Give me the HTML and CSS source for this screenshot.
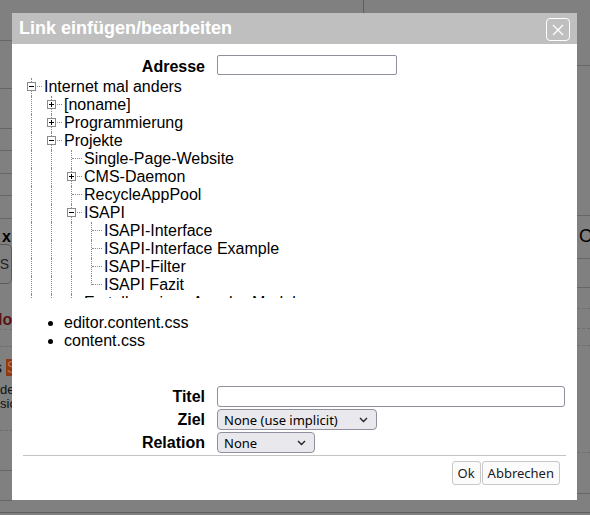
FILE: index.html
```html
<!DOCTYPE html>
<html lang="de">
<head>
<meta charset="utf-8">
<title>Link einfügen/bearbeiten</title>
<link rel="stylesheet" href="styles.css">
</head>
<body>
<div class="backdrop">
  <div class="bg-cols">
    <div class="strip strip-left">
      <div class="sr h41"></div>
      <div class="sr h48"></div>
      <div class="sr h40"></div>
      <div class="sr h22"></div>
      <div class="sr h23"></div>
      <div class="sr h22"></div>
      <div class="sr h23"></div>
      <div class="bg-x">x</div>
      <div class="bg-btn">S</div>
      <div class="bg-lo">lo</div>
      <div class="sr-dash h17"></div>
      <div class="bg-s">s <span class="bg-orange">S</span></div>
      <div class="bg-para">de<br>sic</div>
      <div class="sr-dash h14"></div>
      <div class="sr h40"></div>
      <div class="sr h30"></div>
    </div>
    <div class="bg-mid">
      <div class="bg-vline"></div>
    </div>
    <div class="strip strip-right">
      <div class="sr h66"></div>
      <div class="sr h150"></div>
      <div class="bg-c">C</div>
      <div class="sr h29"></div>
      <div class="sr-dash h21"></div>
      <div class="sr-dash h20"></div>
      <div class="sr-dash h17"></div>
      <div class="sr-dash h107"></div>
      <div class="sr h41"></div>
    </div>
  </div>
  <div class="bg-bottom"></div>
</div>

<div class="dialog">
  <div class="titlebar">
    <span class="title">Link einfügen/bearbeiten</span>
    <button class="close" aria-label="Schließen">
      <svg width="12" height="12" viewBox="0 0 12 12"><path d="M1 1 L11 11 M11 1 L1 11" stroke="#fff" stroke-width="1.3" fill="none"/></svg>
    </button>
  </div>
  <div class="body">
    <div class="field field-top">
      <label class="lbl">Adresse</label>
      <input class="inp inp-addr" type="text">
    </div>

    <div class="tree">
      <div class="row"><span class="c t"><i class="box minus"></i></span><span class="txt">Internet mal anders</span></div>
      <div class="row"><span class="c v"></span><span class="c t"><i class="box plus"></i></span><span class="txt">[noname]</span></div>
      <div class="row"><span class="c v"></span><span class="c t"><i class="box plus"></i></span><span class="txt">Programmierung</span></div>
      <div class="row"><span class="c v"></span><span class="c t"><i class="box minus"></i></span><span class="txt">Projekte</span></div>
      <div class="row"><span class="c v"></span><span class="c v"></span><span class="c t"></span><span class="txt">Single-Page-Website</span></div>
      <div class="row"><span class="c v"></span><span class="c v"></span><span class="c t"><i class="box plus"></i></span><span class="txt">CMS-Daemon</span></div>
      <div class="row"><span class="c v"></span><span class="c v"></span><span class="c t"></span><span class="txt">RecycleAppPool</span></div>
      <div class="row"><span class="c v"></span><span class="c v"></span><span class="c t"><i class="box minus"></i></span><span class="txt">ISAPI</span></div>
      <div class="row"><span class="c v"></span><span class="c v"></span><span class="c v"></span><span class="c t"></span><span class="txt">ISAPI-Interface</span></div>
      <div class="row"><span class="c v"></span><span class="c v"></span><span class="c v"></span><span class="c t"></span><span class="txt">ISAPI-Interface Example</span></div>
      <div class="row"><span class="c v"></span><span class="c v"></span><span class="c v"></span><span class="c t"></span><span class="txt">ISAPI-Filter</span></div>
      <div class="row"><span class="c v"></span><span class="c v"></span><span class="c v"></span><span class="c l"></span><span class="txt">ISAPI Fazit</span></div>
      <div class="row"><span class="c v"></span><span class="c v"></span><span class="c t"></span><span class="txt">Erstellen eines Apache-Moduls</span></div>
    </div>

    <ul class="css-list">
      <li>editor.content.css</li>
      <li>content.css</li>
    </ul>

    <div class="form">
      <div class="field">
        <label class="lbl">Titel</label>
        <input class="inp inp-title" type="text">
      </div>
      <div class="field">
        <label class="lbl">Ziel</label>
        <div class="sel sel-ziel"><span>None (use implicit)</span><svg class="chev" width="9" height="6" viewBox="0 0 9 6"><path d="M1 1 L4.5 4.5 L8 1" stroke="#222" stroke-width="1.4" fill="none"/></svg></div>
      </div>
      <div class="field">
        <label class="lbl">Relation</label>
        <div class="sel sel-rel"><span>None</span><svg class="chev" width="9" height="6" viewBox="0 0 9 6"><path d="M1 1 L4.5 4.5 L8 1" stroke="#222" stroke-width="1.4" fill="none"/></svg></div>
      </div>
    </div>

    <div class="sep"></div>

    <div class="actions">
      <button class="btn">Ok</button>
      <button class="btn">Abbrechen</button>
    </div>
  </div>
</div>
</body>
</html>
```

FILE: styles.css
```css
* { box-sizing: border-box; }
html, body { margin: 0; padding: 0; }
body {
  width: 590px;
  height: 515px;
  overflow: hidden;
  background: #808080;
  font-family: "Liberation Sans", Arial, sans-serif;
  font-size: 16px;
  position: relative;
}

/* ---------- dimmed page behind the dialog ---------- */
.backdrop { width: 590px; }
.bg-cols { display: flex; height: 513px; border-bottom: 1px solid #5e5e5e; }
.strip { display: flex; flex-direction: column; overflow: hidden; }
.strip-left { width: 12px; }
.strip-right { width: 13px; }
.bg-mid { flex: 1; }
.bg-vline { width: 1px; height: 13px; margin-left: 351px; background: #5e5e5e; }
.sr { flex: none; border-bottom: 1px solid #666; }
.sr-dash { flex: none; border-bottom: 1px dashed #6e6e6e; }
.h14 { height: 14px; } .h17 { height: 17px; } .h20 { height: 20px; } .h21 { height: 21px; }
.h22 { height: 22px; } .h23 { height: 23px; } .h29 { height: 29px; } .h30 { height: 30px; }
.h40 { height: 40px; } .h41 { height: 41px; } .h48 { height: 48px; } .h66 { height: 66px; }
.h107 { height: 107px; } .h150 { height: 150px; }
.bg-x { flex: none; height: 25px; line-height: 36px; font-weight: bold; text-align: right; color: #000; padding-right: 1px; }
.bg-btn { flex: none; height: 40px; width: 24px; margin-left: -12px; border: 1px solid #5a5a5a; border-radius: 5px; line-height: 38px; text-align: right; padding-right: 2px; font-size: 14px; color: #222; }
.bg-lo { flex: none; height: 46px; line-height: 72px; font-weight: bold; color: #5a1212; margin-left: -2px; border-bottom: 1px dashed #6e6e6e; }
.bg-s { flex: none; height: 32px; line-height: 42px; white-space: nowrap; margin-left: -6px; color: #111; }
.bg-orange { background: #8a3a14; color: #c86a3a; }
.bg-para { flex: none; height: 38px; font-size: 13px; line-height: 14px; white-space: nowrap; color: #111; padding-top: 4px; }
.bg-c { flex: none; height: 43px; line-height: 40px; padding-left: 2px; font-size: 18px; color: #000; border-bottom: 1px solid #666; }

/* ---------- dialog ---------- */
.dialog {
  position: absolute;
  left: 12px;
  top: 13px;
  width: 565px;
  height: 487px;
  background: #fff;
  display: flex;
  flex-direction: column;
}
.titlebar {
  height: 31px;
  background: #bfbfbf;
  display: flex;
  align-items: center;
  justify-content: space-between;
  padding: 0 7px 0 7px;
}
.title { color: #fff; font-weight: bold; font-size: 18px; }
.close {
  width: 24px;
  height: 23px;
  margin-top: 2px;
  border: 1px solid #fff;
  border-radius: 4px;
  background: transparent;
  padding: 0;
  display: flex;
  align-items: center;
  justify-content: center;
}

.body { flex: 1; padding: 11px 11px 0 11px; display: flex; flex-direction: column; }

.field {
  display: grid;
  grid-template-columns: 182px 1fr;
  column-gap: 12px;
  align-items: start;
}
.lbl { font-weight: bold; text-align: right; line-height: 20px; padding-top: 1px; color: #000; }
.field-top .lbl { padding-top: 2px; }
.inp {
  height: 20px;
  border: 1px solid #8f8f9d;
  border-radius: 2px;
  background: #fff;
  padding: 0 4px;
  font: 13px "Noto Sans", sans-serif;
}
.inp-addr { width: 180px; }
.inp-title { width: 348px; height: 21px; border-radius: 3px; }

/* tree */
.tree {
  margin: 1px 0 0 -2px;
  height: 220px;
  overflow: hidden;
  line-height: 18px;
}
.row { display: flex; height: 18px; }
.c { position: relative; flex: none; width: 20px; height: 18px; }
.c.v::before, .c.t::before, .c.l::before {
  content: "";
  position: absolute;
  left: 10px;
  top: 0;
  height: 18px;
  border-left: 1px dotted #8a8a8a;
}
.c.l::before { height: 9px; }
.c.t::after, .c.l::after {
  content: "";
  position: absolute;
  left: 11px;
  top: 8px;
  width: 10px;
  border-top: 1px dotted #8a8a8a;
}
.box {
  position: absolute;
  left: 6px;
  top: 4px;
  width: 9px;
  height: 9px;
  background: #fff;
  border: 1px solid #8a8a8a;
  z-index: 1;
}
.box::before {
  content: "";
  position: absolute;
  left: 1px;
  top: 3px;
  width: 5px;
  height: 1px;
  background: #000;
}
.box.plus::after {
  content: "";
  position: absolute;
  left: 3px;
  top: 1px;
  width: 1px;
  height: 5px;
  background: #000;
}
.txt { margin-left: 3px; white-space: nowrap; color: #000; }

/* file list */
.css-list {
  margin: 16px 0 0 0;
  padding-left: 41px;
  line-height: 18px;
}

/* form */
.form { margin-top: 36px; display: flex; flex-direction: column; gap: 2px; }
.sel {
  height: 21px;
  border: 1px solid #8f8f9d;
  border-radius: 4px;
  background: #e9e9ed;
  font: 13px "Noto Sans", sans-serif;
  color: #000;
  display: flex;
  align-items: center;
  justify-content: space-between;
  padding: 0 8px 0 6px;
}
.sel-ziel { width: 160px; }
.sel-rel { width: 98px; }
.chev { flex: none; }

.sep { margin-top: 2px; height: 1px; background: #c4c4c4; }

.actions { display: flex; justify-content: flex-end; gap: 1px; margin-top: 5px; padding-right: 6px; }
.btn {
  height: 24px;
  padding: 0 5px;
  border: 1px solid #c8c8c8;
  border-radius: 3px;
  background: #fbfbfb;
  font: 13px "Noto Sans", sans-serif;
  color: #1a1a1a;
}
```
